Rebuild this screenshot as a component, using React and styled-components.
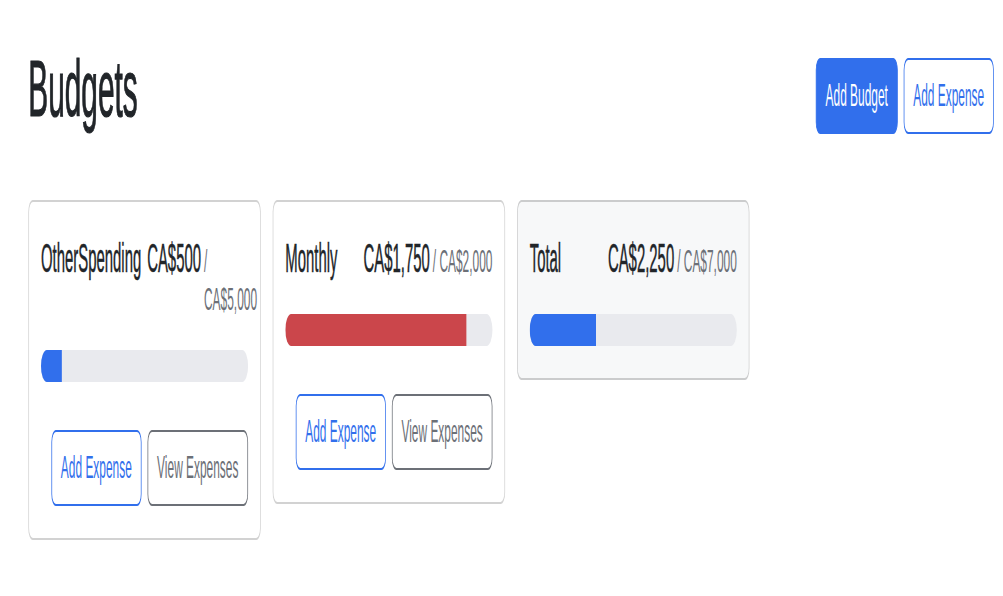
import styled, { createGlobalStyle } from "styled-components";

const BLUE = "#316fec";
const RED = "#cb464b";
const MUTED = "#6c7077";

const budgets = [
  { id: "other", name: "OtherSpending", amount: 500, max: 5000 },
  { id: "monthly", name: "Monthly", amount: 1750, max: 2000 },
];

const formatMoney = (n) => "CA$" + n.toLocaleString("en-US");

function barColor(amount, max) {
  const ratio = amount / max;
  if (ratio < 0.5) return BLUE;
  if (ratio < 0.75) return "#e0a82e";
  return RED;
}

function BudgetCard({ name, amount, max, gray, hideButtons }) {
  return (
    <Card $gray={gray}>
      <CardTitle>
        <Name>{name}</Name>
        <Amount>
          {formatMoney(amount)}
          <Max>/ {formatMoney(max)}</Max>
        </Amount>
      </CardTitle>
      <Progress>
        <Fill
          $color={barColor(amount, max)}
          style={{ width: `${(amount / max) * 100}%` }}
        />
      </Progress>
      {!hideButtons && (
        <ButtonRow>
          <Button $variant="outline" $pushRight>
            Add Expense
          </Button>
          <Button $variant="secondary">View Expenses</Button>
        </ButtonRow>
      )}
    </Card>
  );
}

export default function App() {
  const totalAmount = budgets.reduce((sum, b) => sum + b.amount, 0);
  const totalMax = budgets.reduce((sum, b) => sum + b.max, 0);

  return (
    <>
      <GlobalStyle />
      <Page>
        <Stage>
          <Header>
            <Title>Budgets</Title>
            <Button $variant="primary">Add Budget</Button>
            <Button $variant="outline">Add Expense</Button>
          </Header>
          <Grid>
            {budgets.map((b) => (
              <BudgetCard key={b.id} {...b} />
            ))}
            <BudgetCard
              name="Total"
              amount={totalAmount}
              max={totalMax}
              gray
              hideButtons
            />
          </Grid>
        </Stage>
      </Page>
    </>
  );
}

const GlobalStyle = createGlobalStyle`
  html, body {
    margin: 0;
    background: #fff;
  }
  * {
    box-sizing: border-box;
  }
`;

const Page = styled.div`
  width: 1003px;
  height: 596px;
  overflow: hidden;
`;

// the capture is condensed horizontally and stretched vertically
const Stage = styled.div`
  width: 1346px;
  padding: 20px 12px 0 38px;
  transform: scale(0.745, 2);
  transform-origin: 0 0;
  font-family: "Liberation Sans", Arial, sans-serif;
  font-size: 16px;
  line-height: 1.5;
  color: #212529;
`;

const Header = styled.div`
  display: flex;
  align-items: center;
  gap: 8px;
  width: 1296px;
  margin-bottom: 24px;
`;

const Title = styled.h1`
  margin: 0 auto 8px 0;
  font-size: 40px;
  font-weight: 400;
  line-height: 1.2;
  -webkit-text-stroke: 0.6px #212529;
`;

const Button = styled.button`
  font-family: inherit;
  font-size: 16px;
  line-height: 1.5;
  padding: 6px 12px;
  border-radius: 6px;
  border: 1px solid
    ${(p) => (p.$variant === "secondary" ? MUTED : BLUE)};
  background: ${(p) => (p.$variant === "primary" ? BLUE : "#fff")};
  color: ${(p) =>
    p.$variant === "primary"
      ? "#fff"
      : p.$variant === "secondary"
      ? MUTED
      : BLUE};
  margin-left: ${(p) => (p.$pushRight ? "auto" : "0")};
  white-space: nowrap;
`;

const Grid = styled.div`
  display: grid;
  grid-template-columns: repeat(auto-fill, minmax(300px, 1fr));
  gap: 16px;
  align-items: start;
  width: 1296px;
`;

const Card = styled.div`
  border: 1px solid rgba(0, 0, 0, 0.175);
  border-radius: 6px;
  padding: 16px;
  background: ${(p) => (p.$gray ? "#f7f8f9" : "#fff")};
`;

const CardTitle = styled.div`
  display: flex;
  justify-content: space-between;
  align-items: baseline;
  font-size: 20px;
  line-height: 1.2;
  margin-bottom: 16px;
`;

const Name = styled.div`
  margin-right: 8px;
  -webkit-text-stroke: 0.25px #212529;
`;

const Amount = styled.div`
  display: flex;
  align-items: baseline;
  -webkit-text-stroke: 0.25px #212529;
`;

const Max = styled.span`
  margin-left: 4px;
  font-size: 16px;
  color: ${MUTED};
  -webkit-text-stroke: 0;
`;

const Progress = styled.div`
  height: 16px;
  border-radius: 50rem;
  background: #e9eaee;
  overflow: hidden;
  display: flex;
`;

const Fill = styled.div`
  height: 100%;
  background: ${(p) => p.$color};
`;

const ButtonRow = styled.div`
  display: flex;
  align-items: center;
  gap: 8px;
  margin-top: 24px;
`;
